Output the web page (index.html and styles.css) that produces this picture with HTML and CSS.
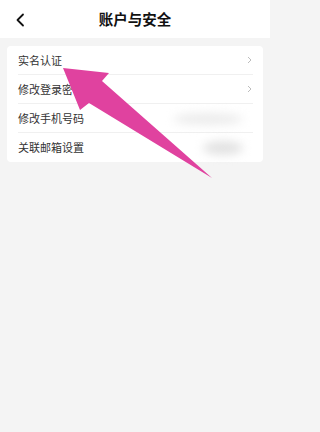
FILE: index.html
```html
<!DOCTYPE html>
<html lang="zh">
<head>
<meta charset="utf-8">
<link rel="stylesheet" href="styles.css">
</head>
<body>
<div class="page">
  <header class="topbar">
    <svg class="back" width="10" height="14" viewBox="0 0 10 14"><path d="M8 1.5 L2.5 7 L8 12.5" fill="none" stroke="#111" stroke-width="1.8" stroke-linecap="round" stroke-linejoin="round"/></svg>
    <h1 class="title">账户与安全</h1>
  </header>
  <main class="content">
    <ul class="card">
      <li class="row"><span class="label">实名认证</span><svg class="chev" width="5" height="8" viewBox="0 0 5 8"><path d="M1 1 L4 4 L1 7" fill="none" stroke="#bdbdbd" stroke-width="1"/></svg></li>
      <li class="row"><span class="label">修改登录密码</span><svg class="chev" width="5" height="8" viewBox="0 0 5 8"><path d="M1 1 L4 4 L1 7" fill="none" stroke="#bdbdbd" stroke-width="1"/></svg></li>
      <li class="row"><span class="label">修改手机号码</span><span class="blur blur-a"></span></li>
      <li class="row"><span class="label">关联邮箱设置</span><span class="blur blur-b"></span></li>
    </ul>
  </main>
  <svg class="arrow" width="270" height="432" viewBox="0 0 270 432">
    <polygon points="63,68 109,73 102,81 212,178 89,103 80,110" fill="#e0429f"/>
  </svg>
</div>
</body>
</html>
```

FILE: styles.css
```css
* { box-sizing: border-box; }
html, body { margin: 0; padding: 0; }
body {
  width: 270px;
  height: 432px;
  background: #f4f4f4;
  font-family: "Noto Sans CJK SC", "Noto Sans", sans-serif;
  overflow: hidden;
}
.page { position: relative; width: 270px; height: 432px; }
.topbar {
  height: 38px;
  background: #fff;
  display: flex;
  align-items: center;
  justify-content: center;
  position: relative;
}
.back { position: absolute; left: 15px; top: 13px; }
.title {
  margin: 0;
  font-size: 14.5px;
  font-weight: 700;
  color: #111;
  letter-spacing: 0;
  line-height: 1;
}
.content { padding: 8px 7px 0 7px; }
.card {
  list-style: none;
  margin: 0;
  padding: 0 10px 0 11px;
  background: #fff;
  border-radius: 4px;
}
.row {
  height: 29px;
  display: flex;
  align-items: center;
  justify-content: space-between;
  border-bottom: 1px solid #f0f0f0;
  position: relative;
}
.row:last-child { border-bottom: none; }
.label {
  font-size: 11px;
  color: #333;
  line-height: 1;
}
.chev { margin-right: 1px; }
.blur {
  position: absolute;
  border-radius: 50%;
  filter: blur(5px);
}
.blur-a { right: 10px; top: 9px; width: 70px; height: 12px; background: #ececec; }
.blur-b { right: 10px; top: 8px; width: 40px; height: 14px; background: #e2e2e2; }
.arrow { position: absolute; left: 0; top: 0; pointer-events: none; }
```
